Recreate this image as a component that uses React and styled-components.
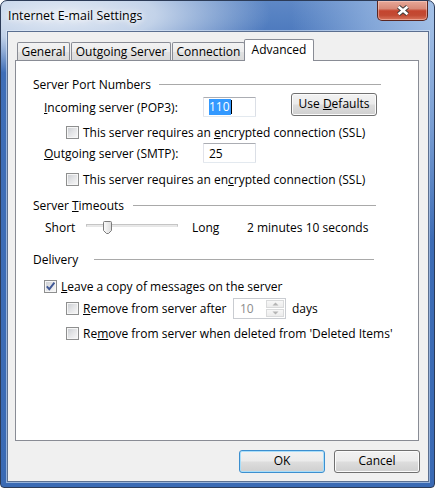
import React from "react"
import styled, { createGlobalStyle } from "styled-components"

const GlobalStyle = createGlobalStyle`
  html, body {
    margin: 0;
    padding: 0;
    background: #fff;
  }
  body {
    width: 435px;
    height: 488px;
    overflow: hidden;
    font-family: "Open Sans", "Noto Sans", sans-serif;
    font-size: 12px;
    color: #000;
  }
  * {
    box-sizing: border-box;
  }
`

const Check = ({ checked }) => (
  <Box>
    {checked && (
      <svg width="11" height="11" viewBox="0 0 11 11">
        <path d="M1.8 5.4 L4.3 8.2 L9.4 1.6" fill="none" stroke="#3f5896" strokeWidth="1.9" />
      </svg>
    )}
  </Box>
)

const CheckRow = ({ checked, children, width, mt, indent, h = 16, after }) => (
  <Row $mt={mt} $h={h} $indent={indent}>
    <Check checked={checked} />
    <CheckText $w={width}>{children}</CheckText>
    {after}
  </Row>
)

const SectionHead = ({ title, width, trail, mt }) => (
  <Head $mt={mt}>
    <HeadText $w={width}>{title}</HeadText>
    <HeadRule $trail={trail} />
  </Head>
)

const App = () => {
  return (
    <Window>
      <GlobalStyle />
      <TitleBar>
        <TitleText>Internet E-mail Settings</TitleText>
        <CloseButton>
          <svg width="14" height="11" viewBox="0 0 14 11">
            <path d="M2.5 1.8 L11.5 9.2 M11.5 1.8 L2.5 9.2" stroke="#3a3a3a" strokeWidth="4.4" />
            <path d="M2.5 1.8 L11.5 9.2 M11.5 1.8 L2.5 9.2" stroke="#fff" strokeWidth="2.6" />
          </svg>
        </CloseButton>
      </TitleBar>

      <Client>
        <TabStrip>
          <Tab $w={53} $mr={1}>General</Tab>
          <Tab $w={100} $mr={1}>Outgoing Server</Tab>
          <Tab $w={73}>Connection</Tab>
          <Tab $w={70} $active>Advanced</Tab>
        </TabStrip>

        <Panel>
          <SectionHead title="Server Port Numbers" width={126} trail={37} mt={0} />

          <Row $mt={4} $h={22} $indent={11}>
            <FieldLabel $w={159}>
              <u>I</u>ncoming server (POP3):
            </FieldLabel>
            <Field>
              <Selected>110</Selected>
              <Caret />
            </Field>
            <PushButton $ml={35} $mt={-3}>
              Use <u>D</u>efaults
            </PushButton>
          </Row>

          <CheckRow mt={6} indent={33}>
            This server requires an <u>e</u>ncrypted connection (SSL)
          </CheckRow>

          <Row $mt={2} $h={22} $indent={11}>
            <FieldLabel $w={159}>
              <u>O</u>utgoing server (SMTP):
            </FieldLabel>
            <Field>25</Field>
          </Row>

          <CheckRow mt={7} indent={33}>
            This server requires an en<u>c</u>rypted connection (SSL)
          </CheckRow>

          <SectionHead
            title={
              <>
                Server <u>T</u>imeouts
              </>
            }
            width={100}
            trail={42}
            mt={10}
          />

          <Row $mt={6} $h={16} $indent={12}>
            <FieldLabel $w={41}>Short</FieldLabel>
            <Slider>
              <Track />
              <Thumb>
                <svg width="9" height="13" viewBox="0 0 9 13">
                  <defs>
                    <linearGradient id="thumbFill" x1="0" y1="0" x2="1" y2="0">
                      <stop offset="0" stopColor="#fbfbfb" />
                      <stop offset="1" stopColor="#dcdcdc" />
                    </linearGradient>
                  </defs>
                  <path
                    d="M1.5 0.5 H7.5 A1 1 0 0 1 8.5 1.5 V9.5 L5.5 12.5 H3.5 L0.5 9.5 V1.5 A1 1 0 0 1 1.5 0.5 Z"
                    fill="url(#thumbFill)"
                    stroke="#7b7b7b"
                  />
                </svg>
              </Thumb>
            </Slider>
            <FieldLabel $w={55} $ml={14}>Long</FieldLabel>
            <FieldLabel>2 minutes 10 seconds</FieldLabel>
          </Row>

          <SectionHead title="Delivery" width={61} trail={44} mt={16} />

          <CheckRow checked mt={11} indent={11}>
            <u>L</u>eave a copy of messages on the server
          </CheckRow>

          <CheckRow
            mt={3}
            h={22}
            indent={33}
            width={150}
            after={
              <>
                <Spinner>
                  <SpinValue>10</SpinValue>
                  <SpinButtons>
                    <SpinButton>
                      <svg width="7" height="4" viewBox="0 0 7 4">
                        <path d="M0.5 3.5 L3.5 0.5 L6.5 3.5 Z" fill="#b4b4b4" />
                      </svg>
                    </SpinButton>
                    <SpinButton>
                      <svg width="7" height="4" viewBox="0 0 7 4">
                        <path d="M0.5 0.5 L3.5 3.5 L6.5 0.5 Z" fill="#b4b4b4" />
                      </svg>
                    </SpinButton>
                  </SpinButtons>
                </Spinner>
                <FieldLabel $ml={6}>days</FieldLabel>
              </>
            }
          >
            <u>R</u>emove from server after
          </CheckRow>

          <CheckRow mt={6} indent={33}>
            Re<u>m</u>ove from server when deleted from 'Deleted Items'
          </CheckRow>
        </Panel>

        <ButtonRow>
          <PushButton $default>OK</PushButton>
          <PushButton>Cancel</PushButton>
        </ButtonRow>
      </Client>
    </Window>
  )
}

export default App

const Window = styled.div`
  width: 435px;
  height: 488px;
  display: flex;
  flex-direction: column;
  border: 1px solid #2c3b57;
  border-radius: 7px 7px 4px 4px;
  overflow: hidden;
  background:
    radial-gradient(ellipse 210px 60px at 60px 14px, rgba(232, 238, 246, 0.97) 0%, rgba(214, 225, 240, 0.85) 45%, rgba(214, 225, 240, 0) 100%),
    radial-gradient(ellipse 150px 230px at 440px 10px, rgba(170, 198, 234, 0.95) 0%, rgba(160, 190, 230, 0.6) 50%, rgba(160, 190, 230, 0) 100%),
    linear-gradient(180deg, #5e88c6 0%, #3f6eb7 12%, #3a6ab4 100%);
`

const TitleBar = styled.div`
  height: 30px;
  flex: none;
  display: flex;
  align-items: flex-start;
  justify-content: space-between;
  padding-left: 7px;
`

const TitleText = styled.span`
  font-size: 12.4px;
  line-height: 30px;
  color: #000;
  text-shadow: 0 0 5px #fff, 0 0 9px rgba(255, 255, 255, 0.9), 0 0 14px rgba(255, 255, 255, 0.7);
`

const CloseButton = styled.div`
  width: 51px;
  height: 20px;
  margin-right: 6px;
  border: 1px solid #5a2620;
  border-top: none;
  border-radius: 0 0 5px 5px;
  display: flex;
  align-items: center;
  justify-content: center;
  background: linear-gradient(180deg, #e7a898 0%, #d88a78 40%, #c4452f 52%, #c24a33 75%, #d9755d 100%);
  box-shadow: inset 0 0 0 1px rgba(255, 220, 210, 0.45);
`

const Client = styled.div`
  flex: 1;
  margin: 0 5px 5px 6px;
  border: 1px solid #5b6f90;
  box-shadow: 0 0 0 1px rgba(225, 236, 250, 0.55);
  background: #f0f0f0;
  display: flex;
  flex-direction: column;
  padding: 7px 9px 8px 7px;
`

const TabStrip = styled.div`
  height: 22px;
  margin-bottom: -1px;
  padding-left: 2px;
  display: flex;
  align-items: flex-end;
  position: relative;
  z-index: 1;
`

const Tab = styled.div`
  width: ${(p) => p.$w}px;
  height: ${(p) => (p.$active ? 22 : 18)}px;
  margin-bottom: ${(p) => (p.$active ? 0 : 1)}px;
  margin-right: ${(p) => p.$mr || 0}px;
  margin-left: ${(p) => (p.$active ? -1 : 0)}px;
  padding-bottom: ${(p) => (p.$active ? 3 : 0)}px;
  border: 1px solid #898c95;
  border-bottom: none;
  border-radius: 2px 2px 0 0;
  background: ${(p) =>
    p.$active ? "#fff" : "linear-gradient(180deg, #f3f3f3 0%, #ececec 50%, #e2e2e2 51%, #dadada 100%)"};
  display: flex;
  align-items: center;
  justify-content: center;
  white-space: nowrap;
`

const Panel = styled.div`
  flex: 1;
  background: #fff;
  border: 1px solid #898c95;
  padding: 15px 0 0 17px;
  display: flex;
  flex-direction: column;
`

const Head = styled.div`
  height: 16px;
  margin-top: ${(p) => p.$mt}px;
  display: flex;
  align-items: center;
`

const HeadText = styled.span`
  width: ${(p) => p.$w}px;
  flex: none;
  white-space: nowrap;
`

const HeadRule = styled.span`
  flex: 1;
  height: 1px;
  background: #a9a9a9;
  margin-right: ${(p) => p.$trail}px;
`

const Row = styled.div`
  height: ${(p) => p.$h}px;
  margin-top: ${(p) => p.$mt}px;
  padding-left: ${(p) => p.$indent}px;
  display: flex;
  align-items: center;
`

const FieldLabel = styled.span`
  ${(p) => (p.$w ? `width: ${p.$w}px; flex: none;` : "")}
  margin-left: ${(p) => p.$ml || 0}px;
  white-space: nowrap;
`

const Field = styled.div`
  width: 53px;
  height: 20px;
  flex: none;
  border: 1px solid;
  border-color: #abadb3 #dbdfe6 #e3e9ef #e2e3ea;
  border-radius: 1px;
  background: #fff;
  padding-left: 5px;
  display: flex;
  align-items: center;
`

const Selected = styled.span`
  background: #3399ff;
  color: #fff;
  line-height: 16px;
  padding: 0 1px 0 0;
`

const Caret = styled.span`
  width: 1px;
  height: 14px;
  background: #000;
`

const PushButton = styled.div`
  width: 86px;
  height: 23px;
  flex: none;
  align-self: flex-start;
  margin-left: ${(p) => p.$ml || 0}px;
  margin-top: ${(p) => p.$mt || 0}px;
  border: 1px solid ${(p) => (p.$default ? "#3c8fcf" : "#707070")};
  border-radius: 3px;
  background: linear-gradient(180deg, #f2f2f2 0%, #ebebeb 48%, #dddddd 52%, #cfcfcf 100%);
  box-shadow: inset 0 0 0 1px ${(p) => (p.$default ? "#a9defa" : "#fbfbfb")};
  text-align: center;
  line-height: 20px;
  white-space: nowrap;
`

const Box = styled.span`
  width: 13px;
  height: 13px;
  flex: none;
  border: 1px solid #8e8f8f;
  background: linear-gradient(135deg, #c8cbd0 0%, #e4e5e7 50%, #f9f9f9 100%);
  box-shadow: inset 0 0 0 1px #f6f6f6;
  display: flex;
  align-items: center;
  justify-content: center;
`

const CheckText = styled.span`
  margin-left: 4px;
  ${(p) => (p.$w ? `width: ${p.$w}px; flex: none;` : "")}
  white-space: nowrap;
`

const Slider = styled.div`
  width: 92px;
  height: 16px;
  flex: none;
  position: relative;
`

const Track = styled.div`
  margin-top: 5px;
  height: 3px;
  border: 1px solid #c5c5c5;
  border-bottom-color: #e6e6e6;
  background: #e9e9e9;
`

const Thumb = styled.div`
  position: absolute;
  left: 17px;
  top: 2px;
  width: 9px;
  height: 13px;
  display: flex;
`

const Spinner = styled.div`
  width: 53px;
  height: 21px;
  flex: none;
  border: 1px solid #c9ccd1;
  background: #fff;
  display: flex;
  padding: 1px;
`

const SpinValue = styled.span`
  flex: 1;
  color: #8d8d8d;
  padding-left: 5px;
  display: flex;
  align-items: center;
`

const SpinButtons = styled.div`
  width: 18px;
  display: flex;
  flex-direction: column;
  gap: 1px;
`

const SpinButton = styled.div`
  flex: 1;
  border: 1px solid #d9dadb;
  background: linear-gradient(180deg, #f7f7f7, #ececec);
  display: flex;
  align-items: center;
  justify-content: center;
`

const ButtonRow = styled.div`
  margin-top: 9px;
  margin-right: -1px;
  display: flex;
  justify-content: flex-end;
  gap: 9px;
`
